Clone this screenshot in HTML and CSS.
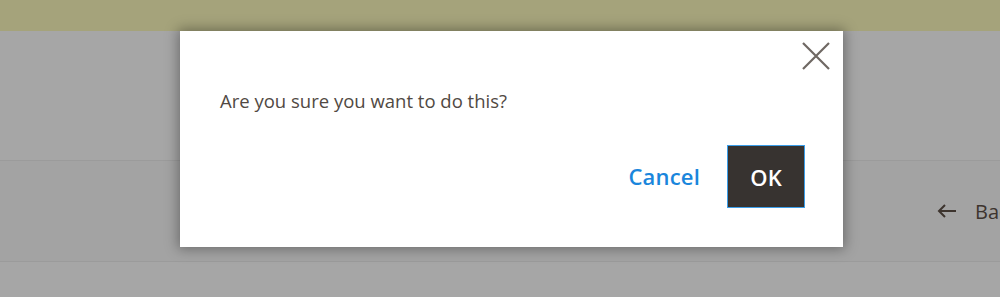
FILE: index.html
```html
<!DOCTYPE html>
<html lang="en">
<head>
<meta charset="utf-8">
<title>Confirm</title>
<link rel="stylesheet" href="styles.css">
</head>
<body>
<div class="page">
  <div class="topbar"></div>
  <div class="content-head"></div>
  <div class="actions-bar">
    <button class="back-btn" type="button">
      <svg class="back-arrow" width="20" height="14" viewBox="0 0 20 14" aria-hidden="true">
        <path d="M19 7H2M8 1L2 7l6 6" fill="none" stroke="#3d342e" stroke-width="2"/>
      </svg>
      <span>Back</span>
    </button>
  </div>
  <div class="rest"></div>
</div>

<aside class="modal" role="dialog">
  <button class="modal-close" type="button" aria-label="Close">
    <svg width="28" height="28" viewBox="0 0 28 28" aria-hidden="true">
      <path d="M1 1L27 27M27 1L1 27" stroke="#6f6863" stroke-width="2.2" fill="none"/>
    </svg>
  </button>
  <div class="modal-body">Are you sure you want to do this?</div>
  <footer class="modal-footer">
    <button class="btn-cancel" type="button">Cancel</button>
    <button class="btn-ok" type="button">OK</button>
  </footer>
</aside>
</body>
</html>
```

FILE: styles.css
```css
* { box-sizing: border-box; }
html, body { margin: 0; padding: 0; }
body {
  width: 1000px;
  height: 297px;
  overflow: hidden;
  background: #a6a6a6;
  font-family: "Open Sans", "Noto Sans", sans-serif;
}
.page { display: flex; flex-direction: column; }
.topbar { height: 31px; background: #a5a37b; }
.content-head { height: 130px; background: #a6a6a6; border-bottom: 1px solid #9b9b9b; }
.actions-bar {
  height: 101px;
  background: #a3a3a3;
  border-bottom: 1px solid #9b9b9b;
  display: flex;
  align-items: center;
  justify-content: flex-start;
  padding-left: 937px;
}
.back-btn {
  display: flex;
  align-items: center;
  gap: 18px;
  background: none;
  border: 0;
  padding: 0;
  font-family: inherit;
  font-size: 20px;
  color: #3d342e;
  white-space: nowrap;
}
.back-arrow { display: block; }
.rest { flex: 1; background: #a6a6a6; }

.modal {
  position: absolute;
  left: 180px;
  top: 31px;
  width: 663px;
  height: 216px;
  background: #fff;
  box-shadow: 0 0 12px 2px rgba(0,0,0,.35);
  display: flex;
  flex-direction: column;
  padding: 57px 38px 39px 40px;
}
.modal-close {
  position: absolute;
  right: 13px;
  top: 11px;
  background: none;
  border: 0;
  padding: 0;
  width: 28px;
  height: 28px;
}
.modal-close svg { display: block; }
.modal-body {
  font-size: 18.5px;
  line-height: 25px;
  color: #514943;
}
.modal-footer {
  margin-top: auto;
  display: flex;
  justify-content: flex-end;
  align-items: center;
  gap: 27px;
}
.btn-cancel {
  background: none;
  border: 0;
  padding: 0 0 2px;
  font-family: inherit;
  font-weight: 600;
  font-size: 22px;
  color: #1a86dc;
  letter-spacing: 0.2px;
}
.btn-ok {
  height: 63px;
  width: 78px;
  background: #373330;
  border: 1px solid #3b9ee9;
  color: #fff;
  font-family: inherit;
  font-weight: 600;
  font-size: 22px;
  display: flex;
  align-items: center;
  justify-content: center;
  padding: 0;
}
```
